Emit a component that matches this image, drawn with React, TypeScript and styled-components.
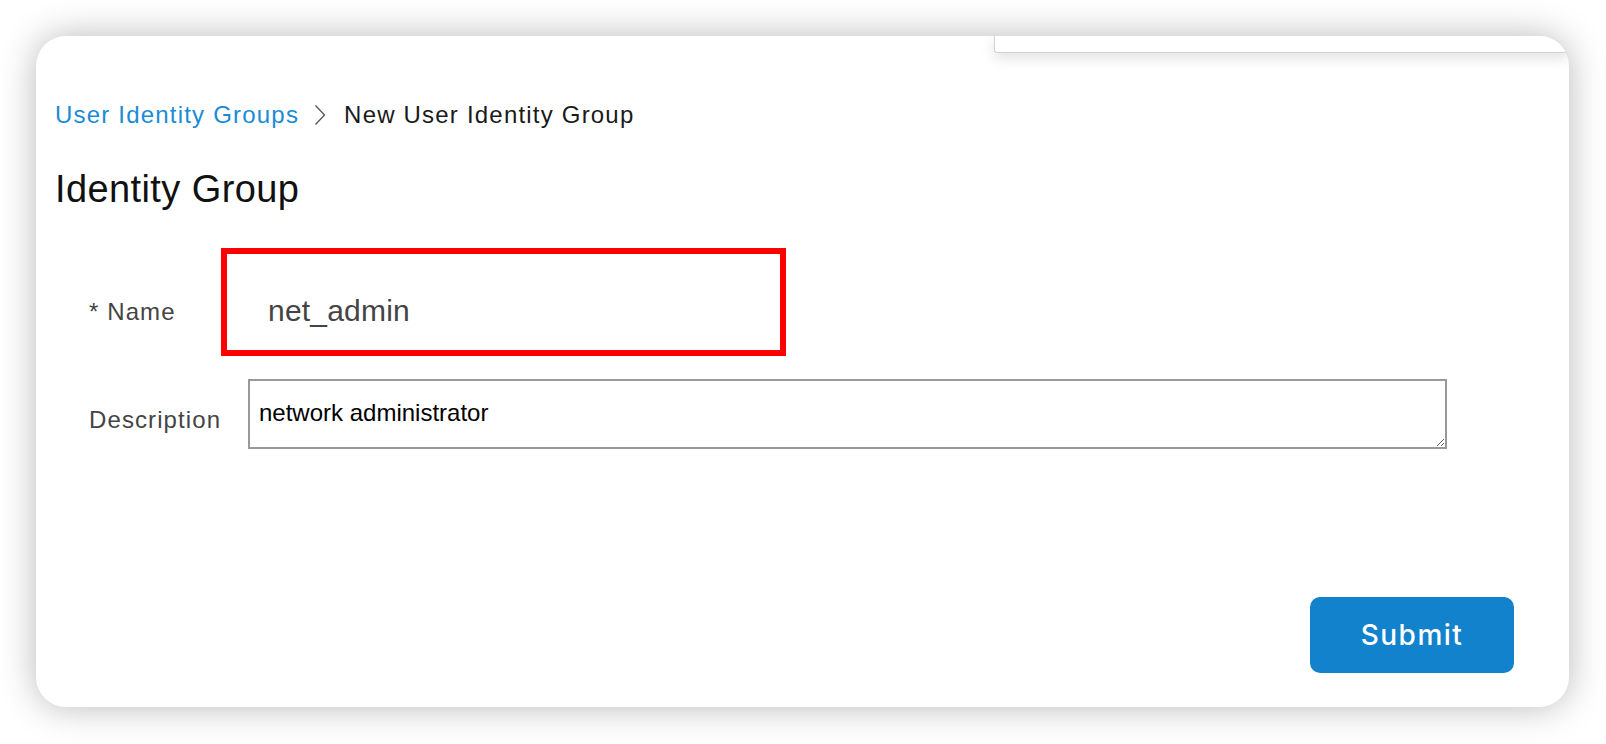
import * as React from 'react'
import styled, { createGlobalStyle } from 'styled-components'

const GlobalStyle = createGlobalStyle`
    html, body {
        margin: 0;
        padding: 0;
        background: #ffffff;
    }
    body {
        font-family: 'Liberation Sans', Arial, sans-serif;
    }
`

const Page = styled.div`
    box-sizing: border-box;
    width: 1606px;
    height: 744px;
    padding: 36px 37px 37px 36px;
    display: flex;
`

const Card = styled.div`
    position: relative;
    flex: 1;
    display: flex;
    flex-direction: column;
    background: #ffffff;
    border-radius: 30px;
    box-shadow: 0 0 36px rgba(0, 0, 0, 0.28);
    overflow: hidden;
    padding: 65px 55px 34px 19px;
`

// the bottom of a dropdown panel peeking in from above
const PeekPanel = styled.div`
    position: absolute;
    top: 0;
    left: 958px;
    right: 0;
    height: 16px;
    background: #ffffff;
    border-left: 1px solid #d2d2d2;
    border-bottom: 1px solid #d2d2d2;
    border-bottom-left-radius: 3px;
    box-shadow: 0 5px 14px rgba(0, 0, 0, 0.12);
`

const Breadcrumb = styled.nav`
    display: flex;
    align-items: center;
    height: 28px;
    font-size: 24px;
    line-height: 28px;
    letter-spacing: 1.2px;
`

const Crumb = styled.span<{ $link?: boolean }>`
    color: ${p => (p.$link ? '#1a8bd5' : '#1a1a1a')};
    cursor: ${p => (p.$link ? 'pointer' : 'default')};
`

const Chevron = styled.svg`
    width: 12px;
    height: 22px;
    margin: 0 18px 0 15px;
    flex-shrink: 0;
`

const Heading = styled.h1`
    margin: 38px 0 0;
    font-size: 38px;
    line-height: 44px;
    font-weight: 400;
    letter-spacing: 0.4px;
    color: #111111;
`

const Form = styled.div`
    display: flex;
    flex-direction: column;
    gap: 23px;
    margin-top: 37px;
    padding: 0 67px 0 34px;
`

const Row = styled.div`
    display: flex;
    align-items: flex-start;
`

const Label = styled.label<{ $nudge: number }>`
    width: 159px;
    flex-shrink: 0;
    padding-top: ${p => p.$nudge}px;
    font-size: 24px;
    line-height: 28px;
    letter-spacing: 1.1px;
    color: #444444;
`

const HighlightInput = styled.input`
    box-sizing: border-box;
    width: 565px;
    height: 108px;
    margin-left: -27px;
    padding: 17px 0 0 41px;
    border: 6px solid #ff0000;
    outline: none;
    background: #ffffff;
    font-family: 'Liberation Sans', Arial, sans-serif;
    font-size: 30px;
    letter-spacing: 0.2px;
    color: #444444;
`

const TextArea = styled.textarea`
    box-sizing: border-box;
    flex: 1;
    height: 70px;
    padding: 18px 9px 0;
    border: 2px solid #999999;
    border-radius: 0;
    outline: none;
    font-family: 'Liberation Sans', Arial, sans-serif;
    font-size: 24px;
    line-height: 28px;
    color: #000000;
`

const Actions = styled.div`
    margin-top: auto;
    display: flex;
    justify-content: flex-end;
`

const SubmitButton = styled.button`
    width: 204px;
    height: 76px;
    border: none;
    border-radius: 10px;
    background: #1282cc;
    color: #ffffff;
    font-family: Inter, 'Liberation Sans', sans-serif;
    font-size: 28px;
    font-weight: 500;
    letter-spacing: 1.5px;
    cursor: pointer;
`

export default function App() {
    return (
        <>
            <GlobalStyle />
            <Page>
                <Card>
                    <PeekPanel />
                    <Breadcrumb>
                        <Crumb $link>User Identity Groups</Crumb>
                        <Chevron viewBox="0 0 12 22">
                            <polyline points="1.5,1.5 10.5,11 1.5,20.5" fill="none" stroke="#555555" strokeWidth="1.3" />
                        </Chevron>
                        <Crumb>New User Identity Group</Crumb>
                    </Breadcrumb>
                    <Heading>Identity Group</Heading>
                    <Form>
                        <Row>
                            <Label $nudge={50}>* Name</Label>
                            <HighlightInput defaultValue="net_admin" />
                        </Row>
                        <Row>
                            <Label $nudge={27}>Description</Label>
                            <TextArea defaultValue="network administrator" />
                        </Row>
                    </Form>
                    <Actions>
                        <SubmitButton>Submit</SubmitButton>
                    </Actions>
                </Card>
            </Page>
        </>
    )
}
